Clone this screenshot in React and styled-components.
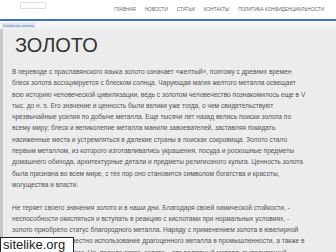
import React from "react";
import styled, { createGlobalStyle } from "styled-components";

const Global = createGlobalStyle`
  html, body {
    margin: 0;
    padding: 0;
    background: #ececec;
    font-family: "Liberation Sans", Arial, sans-serif;
    overflow: hidden;
  }
`;

const Page = styled.div`
  width: 336px;
  height: 252px;
  overflow: hidden;
  position: relative;
  background: #ececec;
`;

const Header = styled.header`
  height: 19px;
  background: #fff;
  border-bottom: 2px solid #3f6fc2;
  display: flex;
  align-items: center;
  justify-content: space-between;
  padding: 0 12px 0 20px;
`;

const Logo = styled.div`
  width: 24px;
  height: 5px;
  margin-top: -8px;
  border: 1px solid #ddd;
  border-radius: 1px;
  background: #fff;
`;

const Nav = styled.nav`
  display: flex;
  gap: 9px;
`;

const NavItem = styled.a`
  font-size: 4.7px;
  color: #666;
  text-transform: uppercase;
  text-decoration: none;
`;

const Crumbs = styled.div`
  height: 8px;
  background: linear-gradient(#f6f7f9, #f1f1f1);
  display: flex;
  align-items: center;
  padding-left: 2px;
`;

const Crumb = styled.a`
  font-size: 4px;
  color: #5a7ab8;
  background: #dfe6f2;
  padding: 0 1px;
  text-decoration: none;
`;

const Main = styled.main`
  border-left: 3px solid #c8c8c8;
  padding: 2px 0 0 9px;
  min-height: 240px;
`;

const Title = styled.h1`
  margin: 0 0 7px 3px;
  font-size: 20px;
  font-weight: normal;
  color: #333;
  line-height: 28px;
`;

const Para = styled.p`
  margin: 0 0 11.3px;
  font-size: 6.6px;
  line-height: 11.3px;
  color: #555;
`;

const Line = styled.span`
  display: block;
  white-space: nowrap;
`;

const Watermark = styled.div`
  position: absolute;
  left: 0;
  bottom: 0;
  width: 70px;
  height: 14px;
  background: #fff;
  border: 1px solid #222;
  border-bottom: none;
  padding-left: 2px;
  font-size: 13px;
  line-height: 14px;
  color: #222;
`;

const nav = ["Главная", "Новости", "Статьи", "Контакты", "Политика конфиденциальности"];

const first = [
  "В переводе с праславянского языка золото означает «желтый», поэтому с древних времен",
  "блеск золота ассоциируется с блеском солнца. Чарующая магия желтого металла освещает",
  "всю историю человеческой цивилизации, ведь с золотом человечество познакомилось еще в V",
  "тыс. до н. э. Его значение и ценность были велики уже тогда, о чем свидетельствуют",
  "чрезвычайные усилия по добыче металла. Еще тысячи лет назад велись поиски золота по",
  "всему миру; блеск и великолепие металла манили завоевателей, заставляя покидать",
  "насиженные места и устремляться в далекие страны в поисках сокровища. Золото стало",
  "первым металлом, из которого изготавливались украшения, посуда и роскошные предметы",
  "домашнего обихода, архитектурные детали и предметы религиозного культа. Ценность золота",
  "была признана во всем мире, с тех пор оно становится символом богатства и красоты,",
  "могущества и власти.",
];

const second = [
  "Не теряет своего значения золото и в наши дни. Благодаря своей химической стойкости, -",
  "неспособности окисляться и вступать в реакцию с кислотами при нормальных условиях, -",
  "золото приобрело статус благородного металла. Наряду с применением золота в ювелирной",
  "отрасли, широко известно использование драгоценного металла в промышленности, а также в",
  "медицине и технологии. Но, прежде всего, золото – это валютный металл, выполняющий",
];

export default function App() {
  return (
    <Page>
      <Global />
      <Header>
        <Logo />
        <Nav>
          {nav.map((n) => (
            <NavItem key={n}>{n}</NavItem>
          ))}
        </Nav>
      </Header>
      <Crumbs>
        <Crumb>Свойства золота</Crumb>
      </Crumbs>
      <Main>
        <Title>ЗОЛОТО</Title>
        <Para>
          {first.map((l) => (
            <Line key={l}>{l}</Line>
          ))}
        </Para>
        <Para>
          {second.map((l) => (
            <Line key={l}>{l}</Line>
          ))}
        </Para>
      </Main>
      <Watermark>sitelike.org</Watermark>
    </Page>
  );
}
